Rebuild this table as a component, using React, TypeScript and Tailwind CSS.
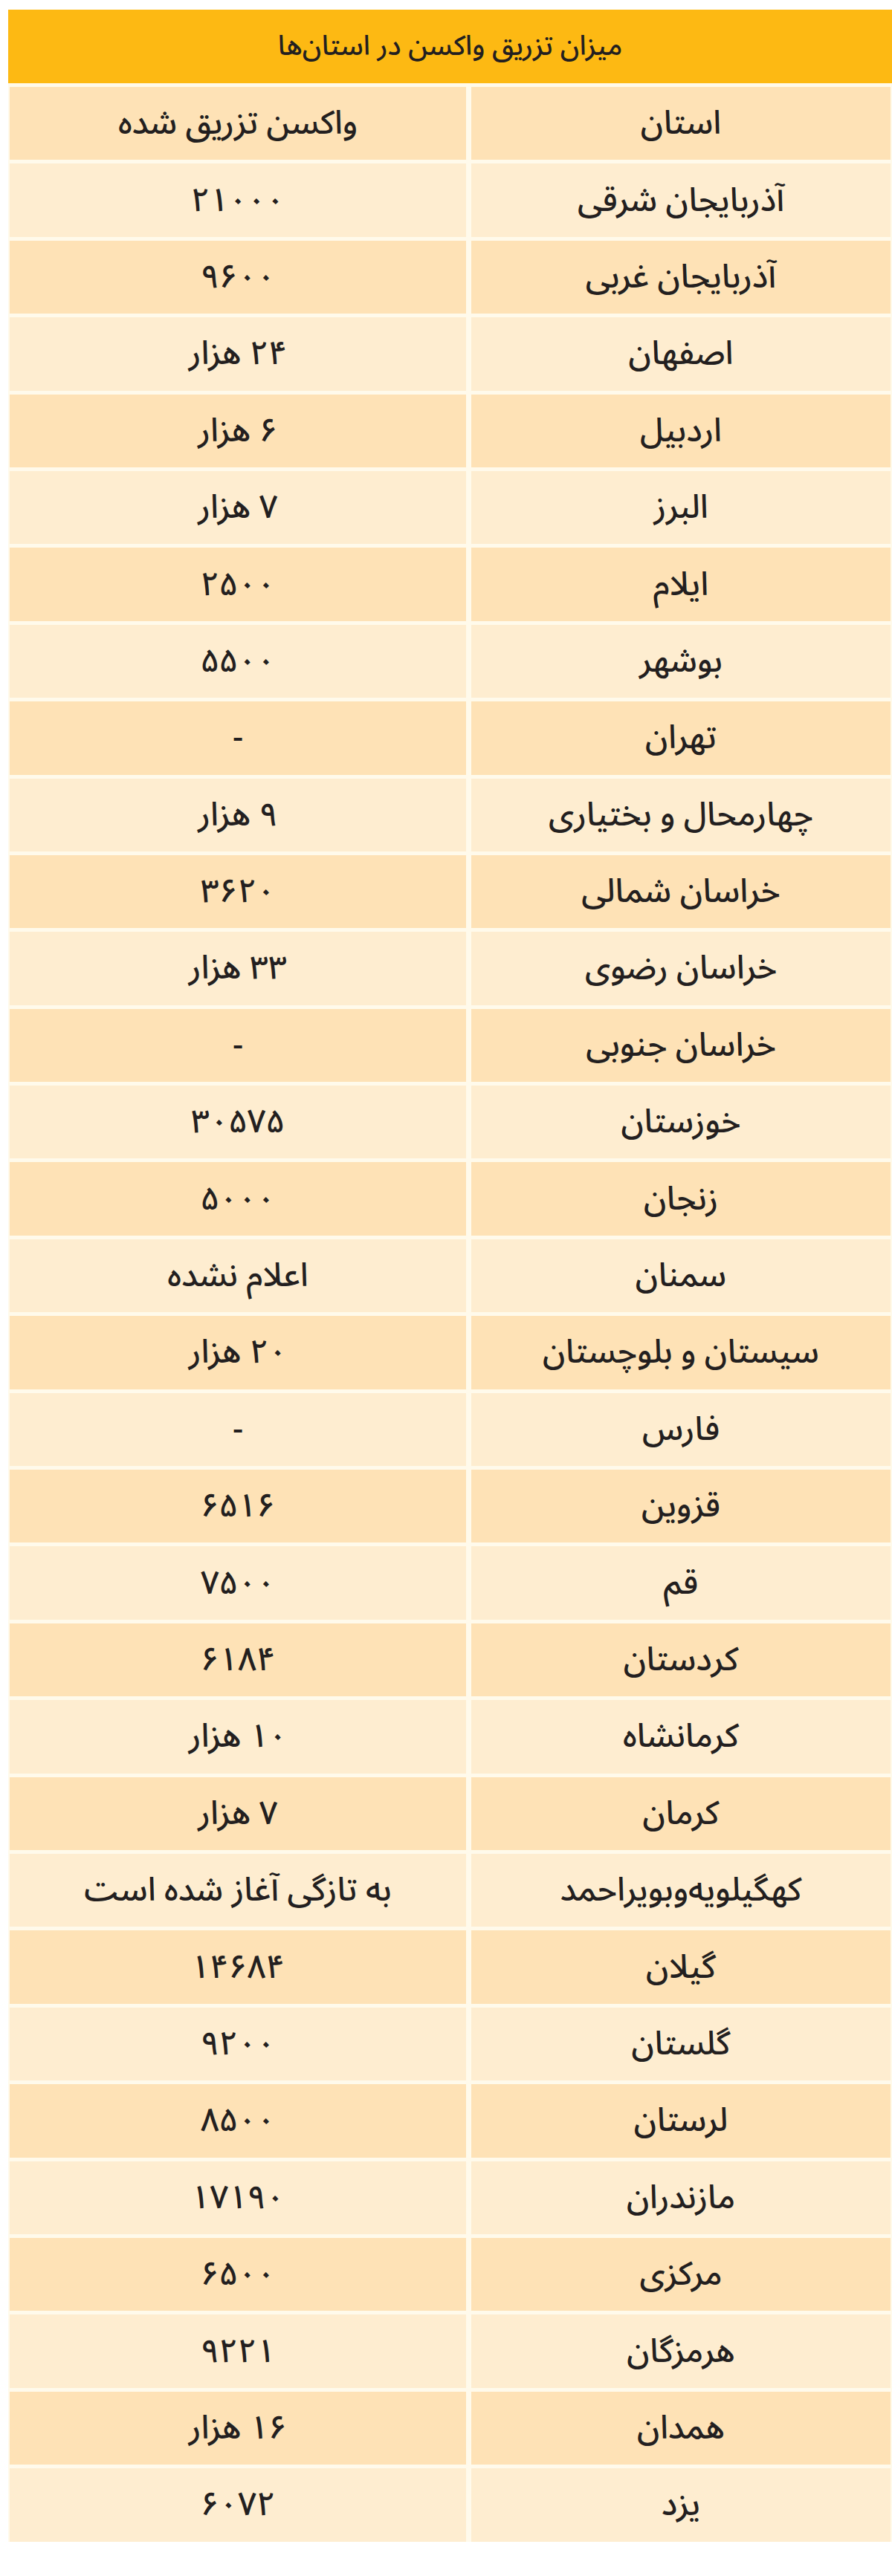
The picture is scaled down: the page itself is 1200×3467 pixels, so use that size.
import React from "react";

const rows: [string, string][] = [
  ["آذربایجان شرقی", "۲۱۰۰۰"],
  ["آذربایجان غربی", "۹۶۰۰"],
  ["اصفهان", "۲۴ هزار"],
  ["اردبیل", "۶ هزار"],
  ["البرز", "۷ هزار"],
  ["ایلام", "۲۵۰۰"],
  ["بوشهر", "۵۵۰۰"],
  ["تهران", "-"],
  ["چهارمحال و بختیاری", "۹ هزار"],
  ["خراسان شمالی", "۳۶۲۰"],
  ["خراسان رضوی", "۳۳ هزار"],
  ["خراسان جنوبی", "-"],
  ["خوزستان", "۳۰۵۷۵"],
  ["زنجان", "۵۰۰۰"],
  ["سمنان", "اعلام نشده"],
  ["سیستان و بلوچستان", "۲۰ هزار"],
  ["فارس", "-"],
  ["قزوین", "۶۵۱۶"],
  ["قم", "۷۵۰۰"],
  ["کردستان", "۶۱۸۴"],
  ["کرمانشاه", "۱۰ هزار"],
  ["کرمان", "۷ هزار"],
  ["کهگیلویه‌وبویراحمد", "به تازگی آغاز شده است"],
  ["گیلان", "۱۴۶۸۴"],
  ["گلستان", "۹۲۰۰"],
  ["لرستان", "۸۵۰۰"],
  ["مازندران", "۱۷۱۹۰"],
  ["مرکزی", "۶۵۰۰"],
  ["هرمزگان", "۹۲۲۱"],
  ["همدان", "۱۶ هزار"],
  ["یزد", "۶۰۷۲"],
];

const font = { fontFamily: '"Noto Sans Arabic", "Vazirmatn", "DejaVu Sans", sans-serif' };

export default function App() {
  const all: [string, string][] = [["استان", "واکسن تزریق شده"], ...rows];
  return (
    <div className="w-[1200px] bg-white pt-[13px] pb-[47px]" dir="rtl" style={font}>
      <div className="ml-[4px] w-[1189px] bg-[#fffaeb]">
        <div className="flex h-[99px] items-center justify-center bg-[#fdb913] text-[37px] font-medium leading-none text-[#231f20]">
          میزان تزریق واکسن در استان‌ها
        </div>
        <div className="flex flex-col gap-y-[5px] px-[2px] pt-[5px]">
          {all.map(([p, v], i) => {
            const bg = i % 2 === 0 ? "bg-[#fee2b6]" : "bg-[#feedd0]";
            return (
              <div key={i} className="grid h-[98.4px] grid-cols-[564px_614px] gap-x-[7px] text-[44px] font-medium leading-none text-[#231f20]">
                <div className={`flex items-center justify-center ${bg}`}>{p}</div>
                <div className={`flex items-center justify-center ${bg}`}>{v}</div>
              </div>
            );
          })}
        </div>
      </div>
    </div>
  );
}
